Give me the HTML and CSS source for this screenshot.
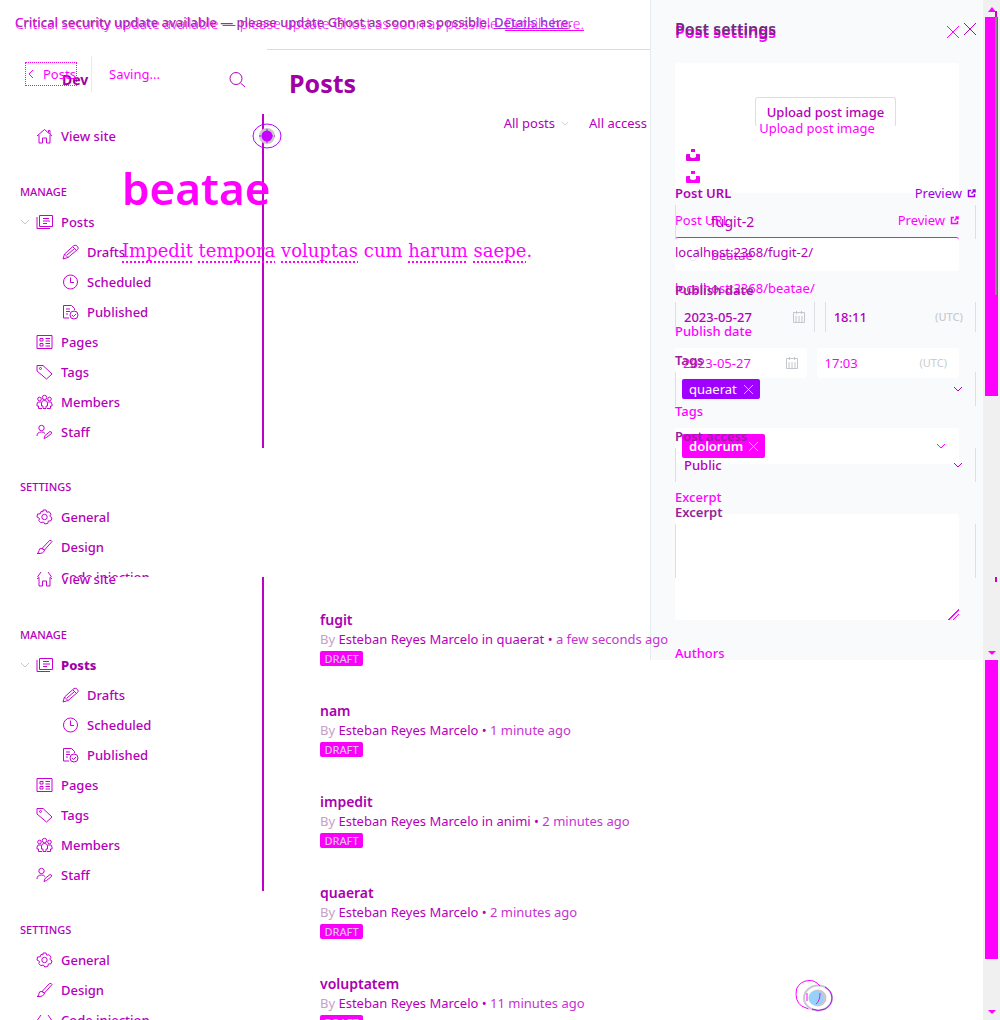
FILE: index.html
```html
<!DOCTYPE html>
<html lang="en">
<head>
<meta charset="utf-8">
<title>Posts</title>
<link rel="stylesheet" href="styles.css">
</head>
<body>
<svg class="defs" aria-hidden="true">
  <symbol id="home" viewBox="0 0 17 16"><path d="M1 8 8.500 1.500 16 8M12.500 4.500V2.500h1.500v3.500M3 7v8h3.500v-5h4v5H14V7"/></symbol>
  <symbol id="posts" viewBox="0 0 17 16"><path d="M3.500 1.500h13v11h-13zM1 3v11.500h13M7 4.500h6M7 7h7M7 9.500h4"/></symbol>
  <symbol id="pencil" viewBox="0 0 17 16"><path d="m1 15 1.500-5L12 1.500q2-1 3.500 1t0 3L6 13.500zM2.500 10 6 13.500M11 3l3 3M5 11l7-6"/></symbol>
  <symbol id="clock" viewBox="0 0 17 16"><circle cx="8.500" cy="8" r="7"/><path d="M8.500 3.500v5h3.500"/></symbol>
  <symbol id="published" viewBox="0 0 17 16"><path d="M7 14H1.500V1.500h8l3 3V6M4 5h4M4 7.500h4M4 10h2"/><circle cx="12" cy="11" r="4"/><path d="m10 11 1.500 1.500L14 10"/></symbol>
  <symbol id="pages" viewBox="0 0 17 16"><path d="M1 1.500h15v13H1zM4 4.500h3v2.500H4zM4 9.500h3V12H4zM9.500 4.500H14M9.500 7H14M9.500 9.500H14M9.500 12H14"/></symbol>
  <symbol id="tag" viewBox="0 0 17 16"><path d="M1 1.500h6l9 8.500-5.500 5L1 7z"/><circle cx="4.500" cy="4.500" r="1"/></symbol>
  <symbol id="members" viewBox="0 0 17 16"><circle cx="8.500" cy="3.500" r="2.200"/><circle cx="3.500" cy="5" r="1.800"/><circle cx="13.500" cy="5" r="1.800"/><path d="M5.500 12V9q0-2.500 3-2.500t3 2.500v3h-1.500v2.500H7V12zM5 8Q1 7 1 10v2h1.500v2.500H6M12 8q4-1 4 2v2h-1.500v2.500H11"/></symbol>
  <symbol id="staff" viewBox="0 0 17 16"><circle cx="5.500" cy="4" r="2.700"/><path d="M1 12q0-4 4.500-4Q8 8 9 9.500M8 14.500l1-3 5-4q2 0 1.500 2l-5 4z"/></symbol>
  <symbol id="gear" viewBox="0 0 17 16"><path d="m7 1 3 0 .8 2.200 2.400-.4 1.800 2.400-1.200 2L16 9l-1 2.800-2.600.2-.6 2.400-3 .6L7.500 13l-2.700.7-2-2.200.8-2L1 8l.5-3 2.700-.2L5 2.500l2 .3z"/><circle cx="8.500" cy="8" r="2.700"/></symbol>
  <symbol id="brush" viewBox="0 0 17 16"><path d="M6 9.500 13.500 1.500q2-.5 2.500 1L8.500 11zM6 9.500 8.500 11Q8 15 1 14.500q2-.5 2-3t3-2"/></symbol>
  <symbol id="code" viewBox="0 0 17 16"><path d="M5 3 1.500 8 5 13M12 3l3.500 5L12 13"/></symbol>
  <symbol id="search" viewBox="0 0 17 16"><circle cx="7" cy="6.500" r="6"/><path d="m11.500 11 4.500 4"/></symbol>
  <symbol id="down" viewBox="0 0 10 6"><path d="m1 1 4 4 4-4"/></symbol>
  <symbol id="cross" viewBox="0 0 12 12"><path d="m0 0 12 12M12 0 0 12"/></symbol>
  <symbol id="out" viewBox="0 0 9 9"><path stroke-width="1.500" d="M4 1.500H1.500v6h6V5M5.500 1H8v2.500M8 1 4.500 4.500"/></symbol>
  <symbol id="unsplash" viewBox="0 0 14 12"><path d="M5 0h4v3H5zM0 6q0-1 1-1h3v3q3 2 6 0V5h3q1 0 1 1v5q0 1-1 1H1q-1 0-1-1z"/></symbol>
  <symbol id="cal" viewBox="0 0 12 12"><path d="M.500 1.500h11v10H.500zM3.500 0v3M8.500 0v3M3 5v6M6 5v6M9 5v6"/></symbol>
  <symbol id="link" viewBox="0 0 14 14"><path d="M5 9 9 5M6.500 3.500 8 2q2-1.500 4 0t0 4l-2 2M7.500 10.500 6 12q-2 1.500-4 0t0-4l2-2"/></symbol>
</svg>

<div class="stage">
  <div class="side">
    <aside class="panel">
      <form class="form form-b">
        <header class="form-head"><h2>Post settings</h2><button type="button" class="icon-btn" aria-label="Close"><svg class="ic12"><use href="#cross"/></svg></button></header>
        <div class="image-box"><button type="button" class="upload">Upload post image</button><svg class="unsplash"><use href="#unsplash"/></svg></div>
        <div class="label-row"><label for="url-b">Post URL</label><a href="#">Preview <svg class="ic9"><use href="#out"/></svg></a></div>
        <div class="control control-url"><svg class="chain"><use href="#link"/></svg><input id="url-b" value="beatae"></div>
        <p class="help">localhost:2368/beatae/</p>
        <label class="label" for="date-b">Publish date</label>
        <div class="dates">
          <div class="control"><input id="date-b" value="2023-05-27"><svg class="cal"><use href="#cal"/></svg></div>
          <div class="control"><input aria-label="Time" value="17:03"><span class="utc">(UTC)</span></div>
        </div>
        <label class="label" for="tags-b">Tags</label>
        <div class="control tags"><button type="button" class="token">dolorum <svg class="ic9"><use href="#cross"/></svg></button><input id="tags-b"><svg class="down"><use href="#down"/></svg></div>
        <label class="label" for="ex-b">Excerpt</label>
        <textarea id="ex-b" class="control"></textarea>
        <span class="label">Authors</span>
      </form>
      <form class="form form-a">
        <header class="form-head"><h2>Post settings</h2><button type="button" class="icon-btn" aria-label="Close"><svg class="ic12"><use href="#cross"/></svg></button></header>
        <button type="button" class="upload">Upload post image</button>
        <svg class="unsplash"><use href="#unsplash"/></svg>
        <div class="label-row"><label for="url-a">Post URL</label><a href="#">Preview <svg class="ic9"><use href="#out"/></svg></a></div>
        <div class="control control-url"><input id="url-a" value="fugit-2"></div>
        <p class="help">localhost:2368/fugit-2/</p>
        <label class="label" for="date-a">Publish date</label>
        <div class="dates">
          <div class="control"><input id="date-a" value="2023-05-27"><svg class="cal"><use href="#cal"/></svg></div>
          <div class="control"><input aria-label="Time" value="18:11"><span class="utc">(UTC)</span></div>
        </div>
        <label class="label" for="tags-a">Tags</label>
        <div class="control tags"><button type="button" class="token">quaerat <svg class="ic9"><use href="#cross"/></svg></button><input id="tags-a"><svg class="down"><use href="#down"/></svg></div>
        <label class="label label-wide" for="access-a">Post access</label>
        <div class="control access"><select id="access-a"><option>Public</option></select><svg class="down"><use href="#down"/></svg></div>
        <label class="label label-wide" for="ex-a">Excerpt</label>
        <textarea id="ex-a" class="control"></textarea>
      </form>
    </aside>
    <div class="scroll scroll-top"><i class="up"></i><i class="thumb"></i><i class="dn"></i></div>
    <div class="scroll scroll-bottom"><i class="thumb"></i><i class="dn"></i></div>
    <i class="inner-thumb"></i><i class="inner-mark"></i>
  </div>

  <div class="app">
    <p class="banner">Critical security update available — please update Ghost as soon as possible. <a href="#">Details here</a>.</p>
    <nav class="sidebar">
      <header class="brand"><strong>Dev</strong><button class="icon-btn" aria-label="Search"><svg class="ic"><use href="#search"/></svg></button></header>
      <section class="primary">
        <a class="item" href="#"><svg class="ic"><use href="#home"/></svg>View site</a>
        <h3>MANAGE</h3>
        <a class="item" href="#"><svg class="down"><use href="#down"/></svg><svg class="ic"><use href="#posts"/></svg>Posts</a>
        <a class="item sub" href="#"><svg class="ic"><use href="#pencil"/></svg>Drafts</a>
        <a class="item sub" href="#"><svg class="ic"><use href="#clock"/></svg>Scheduled</a>
        <a class="item sub" href="#"><svg class="ic"><use href="#published"/></svg>Published</a>
        <a class="item" href="#"><svg class="ic"><use href="#pages"/></svg>Pages</a>
        <a class="item" href="#"><svg class="ic"><use href="#tag"/></svg>Tags</a>
        <a class="item" href="#"><svg class="ic"><use href="#members"/></svg>Members</a>
        <a class="item" href="#"><svg class="ic"><use href="#staff"/></svg>Staff</a>
      </section>
      <section class="settings cut">
        <h3>SETTINGS</h3>
        <a class="item" href="#"><svg class="ic"><use href="#gear"/></svg>General</a>
        <a class="item" href="#"><svg class="ic"><use href="#brush"/></svg>Design</a>
        <a class="item" href="#"><svg class="ic"><use href="#code"/></svg>Code injection</a>
      </section>
      <section class="primary scrolled">
        <a class="item" href="#"><svg class="ic"><use href="#home"/></svg>View site</a>
        <h3>MANAGE</h3>
        <a class="item current" href="#"><svg class="down"><use href="#down"/></svg><svg class="ic"><use href="#posts"/></svg>Posts</a>
        <a class="item sub" href="#"><svg class="ic"><use href="#pencil"/></svg>Drafts</a>
        <a class="item sub" href="#"><svg class="ic"><use href="#clock"/></svg>Scheduled</a>
        <a class="item sub" href="#"><svg class="ic"><use href="#published"/></svg>Published</a>
        <a class="item" href="#"><svg class="ic"><use href="#pages"/></svg>Pages</a>
        <a class="item" href="#"><svg class="ic"><use href="#tag"/></svg>Tags</a>
        <a class="item" href="#"><svg class="ic"><use href="#members"/></svg>Members</a>
        <a class="item" href="#"><svg class="ic"><use href="#staff"/></svg>Staff</a>
      </section>
      <section class="settings">
        <h3>SETTINGS</h3>
        <a class="item" href="#"><svg class="ic"><use href="#gear"/></svg>General</a>
        <a class="item" href="#"><svg class="ic"><use href="#brush"/></svg>Design</a>
        <a class="item" href="#"><svg class="ic"><use href="#code"/></svg>Code injection</a>
      </section>
    </nav>
    <main class="main">
      <h1>Posts</h1>
      <div class="filters"><button>All posts <svg class="down small"><use href="#down"/></svg></button><button>All access</button></div>
      <ul class="list">
        <li><h2>fugit</h2><p><span>By</span> Esteban Reyes Marcelo in quaerat • <em>a few seconds ago</em></p><b class="badge">DRAFT</b></li>
        <li><h2>nam</h2><p><span>By</span> Esteban Reyes Marcelo • <em>1 minute ago</em></p><b class="badge">DRAFT</b></li>
        <li><h2>impedit</h2><p><span>By</span> Esteban Reyes Marcelo in animi • <em>2 minutes ago</em></p><b class="badge">DRAFT</b></li>
        <li><h2>quaerat</h2><p><span>By</span> Esteban Reyes Marcelo • <em>2 minutes ago</em></p><b class="badge">DRAFT</b></li>
        <li><h2>voluptatem</h2><p><span>By</span> Esteban Reyes Marcelo • <em>11 minutes ago</em></p><b class="badge">DRAFT</b></li>
      </ul>
    </main>
  </div>

  <div class="editor">
    <p class="banner">Critical security update available — please update Ghost as soon as possible. <a href="#">Details here.</a></p>
    <div class="toolbar"><a class="back" href="#"><svg class="left" viewBox="0 0 6 10"><path d="M5 1 1 5l4 4"/></svg>Posts</a><span class="saving">Saving...</span></div>
    <h1>beatae</h1>
    <p class="lead"><u>Impedit</u> <u>tempora</u> <u>voluptas</u> cum <u>harum</u> <u>saepe</u>.</p>
  </div>

  <svg class="pointer pointer-top" viewBox="0 0 30 26"><circle cx="15" cy="13" r="8" fill="#c8c8c8" stroke="none"/><circle cx="15" cy="13" r="5.500" fill="#c800ff" stroke="none"/><path d="M7 13h16M15 6v14" stroke="#c800ff" stroke-dasharray="2 1"/><ellipse cx="15" cy="13" rx="14" ry="12" fill="none" stroke="#b400ff"/></svg>
  <svg class="pointer pointer-bottom" viewBox="0 0 38 32"><circle cx="23" cy="18" r="8.500" fill="#c8c8c8" stroke="none"/><circle cx="21" cy="18" r="7.500" fill="#96d2fa" stroke="none"/><path d="M12 13v8M25 13q0 8-4 11" fill="none" stroke="#f0f"/><ellipse cx="23" cy="18" rx="14" ry="12.500" fill="none" stroke="#c8c8d2" stroke-width="2"/><path d="M30 7q7 4 7 11t-7 11q-7 3-13 0" fill="none" stroke="#b400ff"/><path d="M25 6Q20 0 14 .500 5 1 1.500 9q-2 12 5 17l7 3" fill="none" stroke="#f0f"/></svg>
</div>
</body>
</html>
```

FILE: styles.css
```css
* { box-sizing: border-box; }
body { margin: 0; background: #fff; font: 13px/20px "Noto Sans", sans-serif; color: #b400b9; }
h1, h2, h3, p, ul { margin: 0; padding: 0; }
a { color: inherit; text-decoration: none; }
button, input, select, textarea { font: inherit; color: inherit; background: none; border: 0; padding: 0; margin: 0; border-radius: 0; outline: 0; }
input, select { flex: 1; min-width: 0; width: 0; appearance: none; }
svg { fill: none; stroke: currentColor; flex: none; display: block; }
.defs { position: absolute; width: 0; height: 0; }
.ic { width: 17px; height: 16px; }
.ic9 { width: 9px; height: 9px; }
.ic12 { width: 12px; height: 12px; }
.down { width: 10px; height: 6px; }

/* Stacked layers sharing one cell */
.stage { position: relative; display: grid; grid-template-columns: minmax(0, 1fr); height: 100vh; overflow: hidden; }
.stage > div { grid-area: 1 / 1; min-width: 0; min-height: 0; }
.stage > .app, .stage > .editor { z-index: 1; pointer-events: none; }

/* Settings panel and scrollbars */
.side { position: relative; justify-self: end; display: grid; grid-template: 11fr 6fr / 333px 17px; height: 100vh; }
.panel { display: grid; align-content: start; overflow: hidden; background: #f8fafc; border-left: 1px solid #e3ebf3; }
.form { grid-area: 1 / 1; display: flex; flex-direction: column; min-width: 0; padding-left: 24px; }
.form-head, .label-row { display: flex; justify-content: space-between; align-items: center; }
.form-head h2 { font-size: 16px; line-height: 20px; font-weight: 600; }
.label-row a { display: flex; align-items: center; gap: 5px; }
.control { display: flex; align-items: center; padding: 0 8px; }
.dates { display: grid; grid-template-columns: 12fr 13fr; gap: 10px; }
.cal { width: 12px; height: 12px; color: #c3c6cb; margin-right: 1px; }
.utc { color: #c8cbd0; font-size: 11px; padding-right: 4px; }
.unsplash { width: 14px; height: 12px; fill: currentColor; stroke: none; }
.token { display: flex; align-items: center; gap: 7px; color: #fff; border-radius: 2px; padding: 0 7px; line-height: 20px; }
.tags { padding-left: 7px; }

.form-a { padding-top: 19px; padding-right: 7px; z-index: 1; }
.form-a h2 { color: #6e2d78; }
.form-a .upload { align-self: center; margin-top: 58px; height: 30px; padding: 0 11px; border: 1px solid #dcdfe2; border-bottom-color: transparent; border-radius: 3px; font-weight: 500; }
.form-a .unsplash { margin: 22px 11px; color: #e600e6; }
.form-a .label-row label { font-weight: 600; }
.form-a .label-row a { color: #a000e6; }
.form-a .control { height: 34px; margin-top: 2px; border: solid #dcdfe4; border-width: 0 1px; }
.form-a .control-url { padding-left: 35px; font-size: 14px; }
.form-a .dates .control { height: 30px; font-weight: 500; }
.form-a .help { margin-top: 3px; }
.form-a .label { margin-top: 18px; font-weight: 600; color: #96239b; }
.form-a .label-wide { margin-top: 20px; }
.form-a .token { background: #a000ff; }
.form-a .tags { padding-left: 6px; }
.form-a .tags, .form-a .access { padding-right: 12px; }
.form-a .access { font-weight: 500; }
.form-a textarea.control { height: 54px; resize: none; }

.form-b { color: #f0f; padding-top: 22px; padding-right: 24px; }
.image-box { display: grid; place-items: center; height: 130px; margin: 21px 0 17px; background: #fff; border-radius: 3px; }
.image-box > * { grid-area: 1 / 1; }
.image-box .unsplash { place-self: end start; margin: 10px 11px; }
.form-b .control { height: 34px; margin-top: 7px; background: #fff; border-radius: 3px; }
.form-b .control-url { border-top: 1px solid #f0f; padding-left: 14px; gap: 8px; }
.chain { width: 14px; height: 14px; color: #dceaf0; }
.form-b .dates .control { height: 30px; }
.form-b .help { margin-top: 7px; }
.form-b .label { margin-top: 23px; font-weight: 500; }
.form-b .tags { height: 36px; padding-right: 13px; }
.form-b .token { background: #f0f; font-weight: 600; line-height: 24px; gap: 6px; }
.form-b textarea.control { height: 106px; resize: vertical; }
.form-b textarea::-webkit-resizer { background: linear-gradient(135deg, transparent 62%, #f0f 62% 67%, transparent 67% 78%, #f0f 78% 83%, transparent 83%); }

.scroll { display: flex; flex-direction: column; align-items: center; grid-column: 2; background: #f0f0f0; }
.scroll-top { padding: 7px 0 5px; }
.scroll-top .thumb { margin-top: 5px; height: 379px; }
.scroll-bottom { padding-bottom: 6px; }
.thumb { width: 13px; height: 299px; background: #f0f; }
.up, .dn { border: 4px solid transparent; }
.up { border-top: 0; border-bottom: 5px solid #f0f; }
.dn { border-bottom: 0; border-top: 4px solid #f0f; margin-top: auto; }
.inner-thumb, .inner-mark { position: absolute; right: 3px; width: 2px; background: #878787; }
.inner-thumb { top: 11px; height: 284px; border-top: 6px solid #c800c8; }
.inner-mark { top: 577px; height: 5px; background: #c800c8; }

/* Admin layer */
.app { display: grid; grid-template-columns: 264px minmax(0, 1fr); grid-template-rows: 50px 1fr; }
.app a, .app button, .editor a { pointer-events: auto; }
.banner { grid-column: 1 / -1; padding: 12px 15px 0; white-space: nowrap; }
.banner a { text-decoration: underline; }
.app .banner { color: #96329b; font-weight: 500; }
.app .banner a { color: #8c3cd2; }
.brand { display: flex; justify-content: space-between; align-items: center; height: 60px; padding: 0 18px 0 62px; }
.brand strong { color: #a000a0; font-size: 14px; }
.primary { margin-top: 4px; padding-top: 7px; height: 334px; border-right: 2px solid #be00c8; }
.item { display: flex; align-items: center; gap: 8px; height: 30px; padding-left: 36px; font-weight: 500; }
.item .down { color: #c8c8c8; margin: 0 -2px 0 -16px; }
.item .ic { color: #c800d2; }
.sub { padding-left: 62px; }
.current { font-weight: 800; color: #a000a5; }
.sidebar h3 { font-size: 11px; line-height: 30px; font-weight: 500; padding-left: 20px; }
.primary h3 { margin-top: 26px; }
.settings { padding-top: 24px; }
.cut { height: 129px; overflow: hidden; }
.scrolled { margin-top: 0; padding-top: 0; height: 314px; overflow: hidden; }
.scrolled .item:first-child { margin-top: -13px; }
.main { border-top: 1px solid #dcdce1; margin: -1px 350px 0 3px; padding-left: 22px; }
.main h1 { font-size: 25px; line-height: 34px; font-weight: 700; color: #a000a5; padding-top: 16px; }
.filters { display: flex; justify-content: flex-end; gap: 20px; margin-top: 13px; padding-right: 3px; white-space: nowrap; }
.filters button { display: flex; align-items: center; gap: 6px; }
.small { width: 8px; height: 5px; color: #c8c8c8; }
.list { list-style: none; margin-top: 477px; padding-left: 31px; white-space: nowrap; }
.list li { height: 91px; }
.list h2 { font-size: 14px; line-height: 20px; font-weight: 600; color: #aa00af; }
.list p { line-height: 18px; }
.list p span { color: #c8a0c8; }
.list p em { font-style: normal; color: #c832d2; }
.badge { display: block; width: 43px; margin-top: 3px; background: #fa00fa; border-radius: 2px; color: #e8bce8; font-size: 11px; line-height: 15px; font-weight: 500; text-align: center; }

/* Editor layer */
.editor { color: #f0f; }
.editor .banner { padding-top: 14px; font-size: 14px; font-weight: 300; }
.toolbar { display: flex; align-items: center; height: 36px; margin-top: 22px; padding-left: 25px; }
.back { display: flex; align-items: center; gap: 9px; width: 52px; height: 24px; padding-left: 2px; border: 1px dotted #f0f; white-space: nowrap; }
.left { width: 6px; height: 10px; }
.saving { margin-left: 14px; padding-left: 17px; line-height: 36px; border-left: 1px solid #e6ebf5; }
.editor h1 { margin-top: 66px; padding-left: 122px; font-size: 44px; line-height: 60px; font-weight: 600; }
.lead { margin-top: 20px; padding-left: 122px; font: 18px/26px "DejaVu Serif", serif; }
.lead u { text-decoration: underline dotted 2px; text-underline-offset: 4px; }

.pointer { position: absolute; z-index: 2; }
.pointer-top { left: 252px; top: 123px; width: 30px; height: 26px; }
.pointer-bottom { left: 795px; top: 980px; width: 38px; height: 32px; }
```
